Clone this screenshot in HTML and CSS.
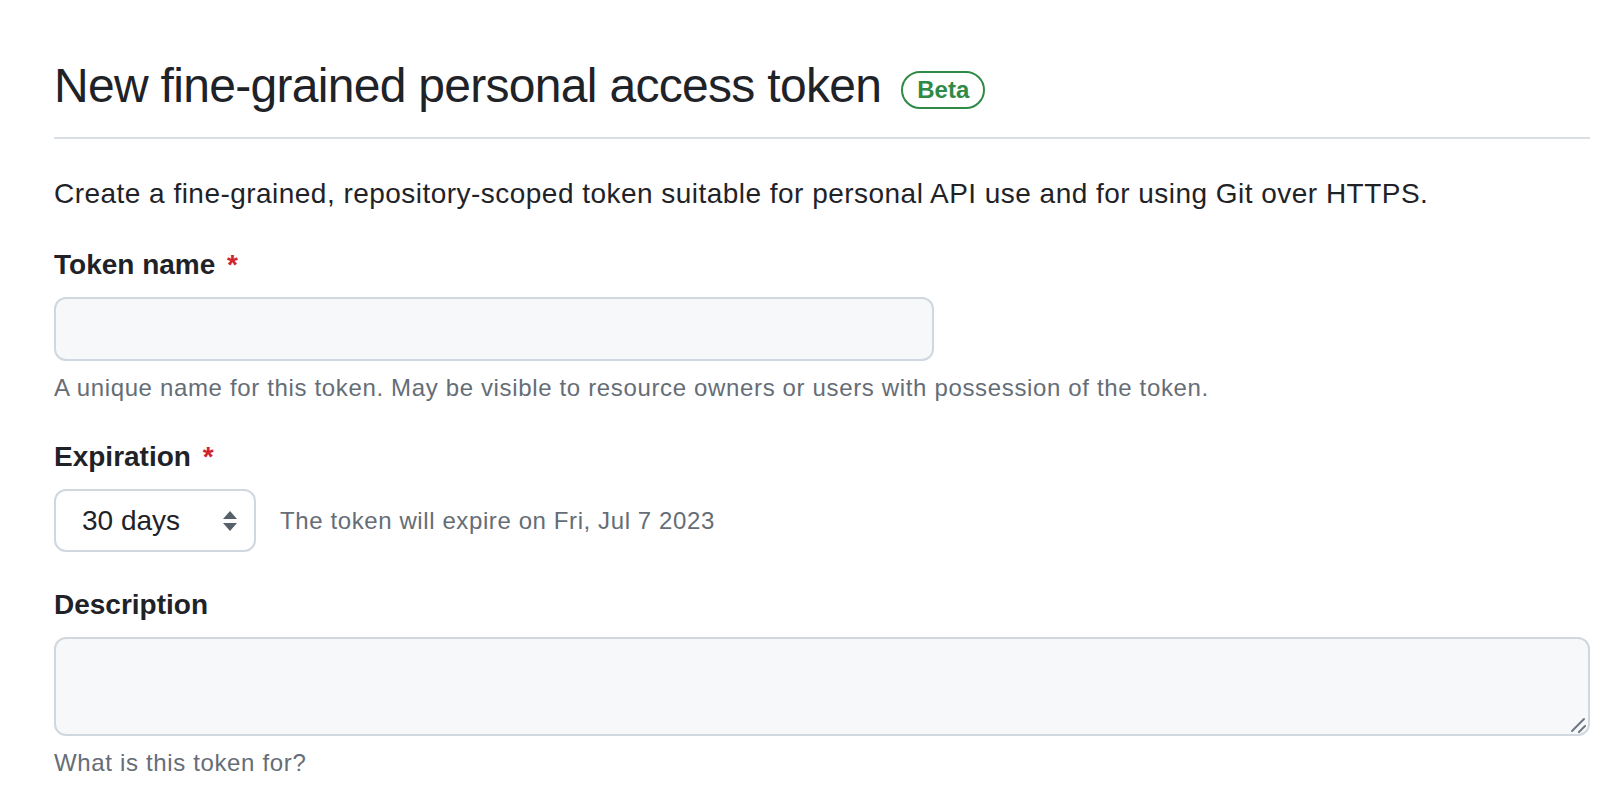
FILE: index.html
```html
<!DOCTYPE html>
<html lang="en">
<head>
<meta charset="utf-8">
<title>New fine-grained personal access token</title>
<link rel="stylesheet" href="styles.css">
</head>
<body>
<main class="page">
  <div class="subhead">
    <h2 class="subhead-title">New fine-grained personal access token</h2>
    <span class="label-beta">Beta</span>
  </div>
  <p class="intro">Create a fine-grained, repository-scoped token suitable for personal API use and for using Git over HTTPS.</p>

  <div class="form-group">
    <label class="form-label" for="token-name">Token name <span class="req">*</span></label>
    <input class="form-input input-name" id="token-name" type="text">
    <p class="note">A unique name for this token. May be visible to resource owners or users with possession of the token.</p>
  </div>

  <div class="form-group form-group-exp">
    <label class="form-label" for="expiration">Expiration <span class="req">*</span></label>
    <div class="expire-row">
      <div class="select">
        <span class="select-value">30 days</span>
        <svg class="select-arrows" width="16" height="22" viewBox="0 0 16 22" aria-hidden="true">
          <path d="M8 1 L15 9 L1 9 Z" fill="#57606a"/>
          <path d="M8 21 L15 13 L1 13 Z" fill="#57606a"/>
        </svg>
      </div>
      <span class="expire-note">The token will expire on Fri, Jul 7 2023</span>
    </div>
  </div>

  <div class="form-group">
    <label class="form-label" for="description">Description</label>
    <div class="textarea-wrap">
      <textarea class="form-input textarea" id="description"></textarea>
      <svg class="grip" width="16" height="16" viewBox="0 0 16 16" aria-hidden="true">
        <path d="M2 14 L14 2" stroke="#6e7781" stroke-width="2" stroke-linecap="round"/>
        <path d="M9 15 L15 9" stroke="#6e7781" stroke-width="2" stroke-linecap="round"/>
      </svg>
    </div>
    <p class="note">What is this token for?</p>
  </div>
</main>
</body>
</html>
```

FILE: styles.css
```css
* { box-sizing: border-box; }

html, body {
  margin: 0;
  padding: 0;
  background: #ffffff;
}

body {
  font-family: "Liberation Sans", Arial, sans-serif;
  color: #1f2328;
  overflow: hidden;
}

.page {
  width: 1590px;
  padding: 50px 0 0 54px;
}

.subhead {
  display: flex;
  align-items: center;
  gap: 20px;
  padding-bottom: 15px;
  border-bottom: 2px solid #d8dee4;
  margin-bottom: 34px;
}

.subhead-title {
  margin: 0;
  font-size: 48px;
  line-height: 72px;
  font-weight: 400;
  letter-spacing: -0.7px;
}

.label-beta {
  display: inline-flex;
  align-items: center;
  height: 38px;
  padding: 0 14px;
  border: 2px solid #2f8a46;
  border-radius: 40px;
  color: #2f8a46;
  font-size: 24px;
  font-weight: 700;
  margin-top: 7px;
}

.intro {
  margin: 0 0 29px;
  font-size: 28px;
  line-height: 42px;
  letter-spacing: 0.47px;
}

.form-group {
  margin-bottom: 30px;
}

.form-group-exp {
  margin-bottom: 32px;
}

.form-label {
  display: block;
  font-size: 28px;
  line-height: 42px;
  font-weight: 700;
  margin-bottom: 11px;
}

.req {
  color: #d1242f;
  margin-left: 4px;
}

.form-input {
  display: block;
  background: #f6f8fa;
  border: 2px solid #d0d7de;
  border-radius: 12px;
  font-family: inherit;
  font-size: 28px;
  outline: none;
}

.input-name {
  width: 880px;
  height: 64px;
}

.note {
  margin: 9px 0 0;
  font-size: 24px;
  line-height: 36px;
  color: #656d76;
  letter-spacing: 0.65px;
}

.expire-row {
  display: flex;
  align-items: center;
  gap: 24px;
}

.select {
  display: flex;
  align-items: center;
  justify-content: space-between;
  width: 202px;
  height: 63px;
  padding: 0 16px 0 26px;
  border: 2px solid #d0d7de;
  border-radius: 12px;
  background: #ffffff;
}

.select-value {
  font-size: 28px;
  color: #1f2328;
}

.expire-note {
  font-size: 24px;
  color: #656d76;
  letter-spacing: 0.6px;
}

.textarea-wrap {
  position: relative;
  width: 1536px;
}

.textarea {
  width: 1536px;
  height: 99px;
  resize: none;
}

.grip {
  position: absolute;
  right: 4px;
  bottom: 3px;
}
```
